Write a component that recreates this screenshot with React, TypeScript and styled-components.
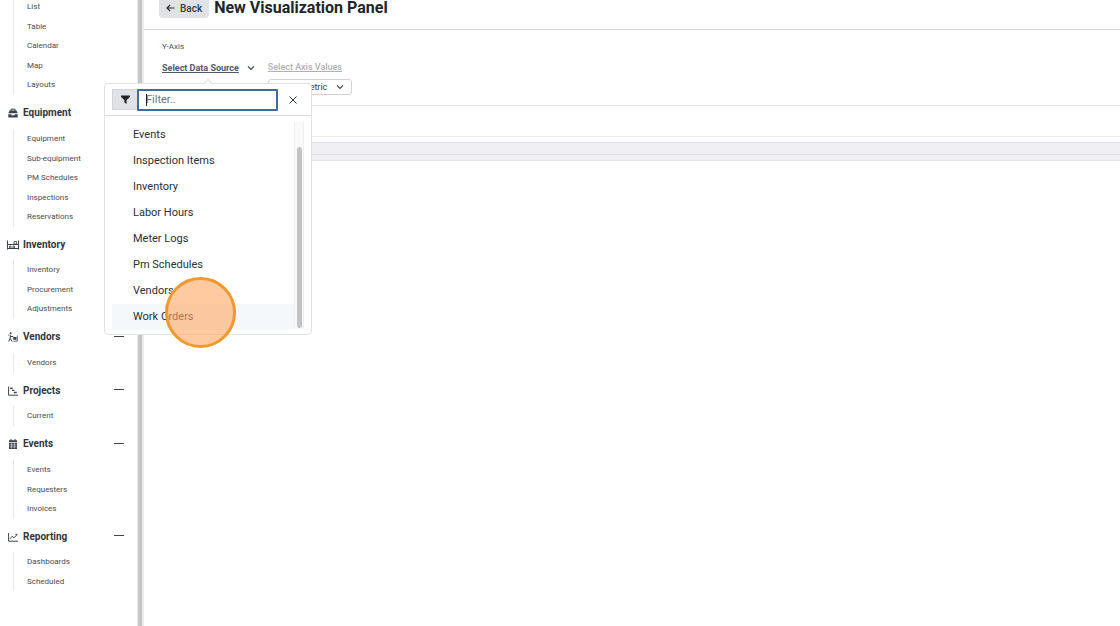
import React from 'react';
import styled, { createGlobalStyle } from 'styled-components';

const GlobalStyle = createGlobalStyle`
  *, *::before, *::after { box-sizing: border-box; }
  html, body, #root { height: 100%; }
  body {
    margin: 0;
    overflow: hidden;
    background: #fff;
    color: #343a40;
    font-family: Roboto, "Liberation Sans", sans-serif;
  }
  ul { list-style: none; margin: 0; padding: 0; }
  button, input, select { font-family: inherit; color: inherit; margin: 0; }
`;

const Shell = styled.div`
  display: flex;
  height: 100%;
  overflow: hidden;
`;

const Sidebar = styled.nav`
  flex: 0 0 137px;
  padding: 0 13px 0 8px;
`;

const Splitter = styled.div`
  flex: 0 0 7px;
  background: #c6c6c6;
  border: solid #ebebeb;
  border-width: 0 2px 0 1px;
`;

const Section = styled.section`
  &:first-child { margin-top: -3px; }
`;

const SectionHeader = styled.h2`
  display: flex;
  align-items: center;
  gap: 5px;
  height: 34px;
  margin: 0;
  padding-top: 2px;
  font-size: 10px;
  font-weight: 700;
  line-height: 14px;
  color: #30363d;
  ${Section}:nth-child(odd) & { height: 33px; }
`;

const SectionIcon = styled.svg`
  flex: none;
  width: 10px;
  height: 10px;
  overflow: visible;
  fill: none;
  stroke: #3c434b;
`;

const Collapse = styled.button`
  display: flex;
  margin-left: auto;
  padding: 4px 0 6px;
  border: 0;
  background: none;
  &::before {
    content: "";
    width: 10px;
    height: 1px;
    background: #3c434b;
  }
`;

const LinkList = styled.ul`
  margin-left: 5px;
  padding-left: 13px;
  border-left: 1px solid #e6e7e9;
`;

const LinkItem = styled.li`
  display: flex;
  align-items: center;
  height: 20px;
  &:nth-child(even) { height: 19px; }
`;

const NavLink = styled.a`
  font-size: 8px;
  line-height: 12px;
  color: #474d54;
  text-decoration: none;
`;

const Main = styled.main`
  flex: 1;
  min-width: 0;
`;

const TopBar = styled.header`
  display: flex;
  align-items: flex-end;
  gap: 5px;
  height: 30px;
  padding: 0 15px 11px;
  border-bottom: 1px solid #d3d6d9;
`;

const BackButton = styled.button`
  display: flex;
  flex: none;
  align-items: center;
  gap: 5px;
  height: 22px;
  padding: 2px 7px 0;
  border: 0;
  border-radius: 4px;
  background: #e1e2e6;
  font-size: 10px;
  font-weight: 500;
`;

const Title = styled.h1`
  margin: 0;
  font-size: 16px;
  font-weight: 700;
  line-height: 20px;
  color: #212529;
`;

const AxisPanel = styled.section`
  height: 76px;
  padding: 11px 18px 0;
  border-bottom: 1px solid #e6e7ea;
`;

const AxisLabel = styled.p`
  margin: 0;
  font-size: 8px;
  line-height: 12px;
  color: #474d54;
`;

const AxisRow = styled.div`
  display: flex;
  align-items: flex-start;
  gap: 13px;
  padding-top: 7px;
`;

const AxisColumn = styled.div`
  position: relative;
  display: flex;
  flex-direction: column;
  align-items: flex-start;
  gap: 5px;
`;

const LinkButton = styled.button<{ $muted?: boolean }>`
  display: flex;
  align-items: center;
  gap: 8px;
  margin-top: ${(p) => (p.$muted ? '0' : '1px')};
  padding: 0;
  border: 0;
  background: none;
  font-size: 9px;
  font-weight: ${(p) => (p.$muted ? 500 : 700)};
  line-height: 14px;
  color: ${(p) => (p.$muted ? '#b0b0b0' : '#4a5a6b')};
  span { text-decoration: underline; }
`;

const MetricBox = styled.span`
  display: flex;
  align-items: center;
  height: 16px;
  padding-right: 7px;
  border: 1px solid #d0d4d8;
  border-radius: 3px;
`;

const MetricSelect = styled.select`
  appearance: none;
  width: 67px;
  padding: 0 0 0 6px;
  border: 0;
  background: none;
  font-size: 9px;
  line-height: 14px;
  outline: 0;
`;

const Popup = styled.div`
  position: absolute;
  z-index: 2;
  top: 23px;
  left: -58px;
  width: 208px;
  height: 252px;
  border: 1px solid #e0e2e5;
  border-radius: 4px;
  background: #fff;
  &::before {
    content: "";
    position: absolute;
    top: -4px;
    left: 100px;
    width: 6px;
    height: 6px;
    border: solid #dfe1e4;
    border-width: 1px 0 0 1px;
    background: #fff;
    transform: rotate(45deg);
  }
`;

const FilterBar = styled.div`
  display: flex;
  align-items: center;
  height: 32px;
  padding: 0 3px 0 7px;
  border-bottom: 1px solid #dadde0;
`;

const FilterIcon = styled.label`
  display: flex;
  align-items: center;
  justify-content: center;
  width: 25px;
  height: 21px;
  border: 1px solid #d3d5da;
  border-right: 0;
  background: #e1e2e7;
`;

const FilterField = styled.span`
  position: relative;
  flex: 1;
  display: flex;
`;

const FilterInput = styled.input`
  width: 100%;
  height: 22px;
  padding: 0 7px;
  border: 2px solid #3f6d99;
  border-radius: 1px;
  background: #fff;
  font-size: 11px;
  outline: 0;
  &::placeholder { color: #6c757d; opacity: 1; }
`;

const Caret = styled.i`
  position: absolute;
  top: 5px;
  left: 9px;
  width: 1px;
  height: 12px;
  background: #222;
`;

const CloseButton = styled.button`
  display: flex;
  align-items: center;
  justify-content: center;
  width: 30px;
  height: 21px;
  padding: 0;
  border: 0;
  background: none;
`;

const OptionArea = styled.div`
  display: flex;
  height: 213px;
  padding: 6px 7px 0;
`;

const OptionList = styled.ul`
  flex: 1;
`;

const Option = styled.li<{ $active?: boolean }>`
  height: 26px;
  background: ${(p) => (p.$active ? '#f5f8fb' : 'transparent')};
`;

const OptionButton = styled.button`
  display: block;
  width: 100%;
  height: 26px;
  padding: 0 21px;
  border: 0;
  background: none;
  font-size: 11px;
  line-height: 26px;
  text-align: left;
  color: #2b3036;
`;

const Track = styled.div`
  width: 10px;
  padding: 25px 2px 0;
  background: #f9f9fa;
  border: solid #f0f0f1;
  border-width: 0 1px;
`;

const Thumb = styled.div`
  width: 5px;
  height: 181px;
  border-radius: 3px;
  background: #c3c3c3;
`;

const Ring = styled.div`
  position: absolute;
  top: 193px;
  left: 60px;
  width: 71px;
  height: 71px;
  border: 3px solid #ef982f;
  border-radius: 50%;
  background: rgba(255, 166, 96, 0.6);
`;

const Spacer = styled.div`
  height: 31px;
  border-bottom: 1px solid #ececef;
`;

const Band = styled.div`
  height: 19px;
  margin-top: 5px;
  border: solid #e2e2e8;
  border-width: 1px 0;
  background: #efeff4;
  &::before {
    content: "";
    display: block;
    height: 12px;
    border-bottom: 1px solid #dfdfe6;
  }
`;

const Chevron = () => (
  <svg width="8" height="8" viewBox="0 0 8 8" fill="none" stroke="#3c434b" strokeWidth="1.2">
    <path d="M1 2.3 4 5.4 7 2.3" />
  </svg>
);

const icons: Record<string, React.ReactNode> = {
  Equipment: (
    <>
      <path d="M3 3V1.2h4V3" />
      <path d="M.3 5.2 1.6 2.6h6.8l1.3 2.6zM.3 6.2h3v1h3.4v-1h3V9.4H.3z" fill="#3c434b" stroke="none" />
    </>
  ),
  Inventory: (
    <>
      <path d="M-.5 .5v9M10.500 .5v9M-.5 4.500h11M-.5 8.500h11" />
      <path d="M6 1.500h2.500v2.500H6zM1.500 6h1.500v2H1.500zM5 6h1.500v2H5z" strokeWidth=".8" />
    </>
  ),
  Vendors: (
    <>
      <circle cx="2.6" cy="1.300" r="1" fill="#3c434b" stroke="none" />
      <path d="M.3 3h1M2.300 3v3.500L4 9.500M2.300 4.500h3M1.800 6.500.8 9.600" />
      <path d="M5.200 5h3.300v2.800H5.200z" fill="#3c434b" stroke="none" />
      <path d="M9.300 3.500v5.700H5.500" strokeWidth=".8" />
    </>
  ),
  Projects: (
    <>
      <path d="M.6.500v8.700H10" />
      <path d="M2.200 2.300h2.500M3.900 4.400h2.500M5.800 6.500h3" strokeWidth="1.400" />
    </>
  ),
  Events: (
    <>
      <path d="M3 0v2M7 0v2" />
      <path d="M1 1.200h8v2H1zM1 3.900h8V10H1z" fill="#3c434b" stroke="none" />
      <path d="M1.500 5.900h7M1.500 7.900h7M3.600 4v5.500M6.400 4v5.500" stroke="#fff" strokeWidth=".5" />
    </>
  ),
  Reporting: <path d="M.6 1v8.200H10M2 6.800l2.200-2.600 1.800 1.600L9.200 2.500M7.400 2.400h2" />,
};

const sections: { title?: string; links: string[] }[] = [
  { links: ['List', 'Table', 'Calendar', 'Map', 'Layouts'] },
  { title: 'Equipment', links: ['Equipment', 'Sub-equipment', 'PM Schedules', 'Inspections', 'Reservations'] },
  { title: 'Inventory', links: ['Inventory', 'Procurement', 'Adjustments'] },
  { title: 'Vendors', links: ['Vendors'] },
  { title: 'Projects', links: ['Current'] },
  { title: 'Events', links: ['Events', 'Requesters', 'Invoices'] },
  { title: 'Reporting', links: ['Dashboards', 'Scheduled'] },
];

const sources = ['Events', 'Inspection Items', 'Inventory', 'Labor Hours', 'Meter Logs', 'Pm Schedules', 'Vendors', 'Work Orders'];

export default function App() {
  return (
    <>
      <GlobalStyle />
      <Shell>
        <Sidebar>
          {sections.map((s, i) => (
            <Section key={i}>
              {s.title && (
                <SectionHeader>
                  <SectionIcon viewBox="0 0 10 10">{icons[s.title]}</SectionIcon>
                  {s.title}
                  <Collapse aria-label={`Collapse ${s.title}`} />
                </SectionHeader>
              )}
              <LinkList>
                {s.links.map((l) => (
                  <LinkItem key={l}><NavLink href="#">{l}</NavLink></LinkItem>
                ))}
              </LinkList>
            </Section>
          ))}
        </Sidebar>
        <Splitter />
        <Main>
          <TopBar>
            <BackButton>
              <svg width="9" height="8" viewBox="0 0 9 8" fill="none" stroke="#2b3036" strokeWidth="1.2">
                <path d="M8.500 4H1M4 1 1 4l3 3" />
              </svg>
              Back
            </BackButton>
            <Title>New Visualization Panel</Title>
          </TopBar>
          <AxisPanel>
            <AxisLabel>Y-Axis</AxisLabel>
            <AxisRow>
              <AxisColumn>
                <LinkButton aria-haspopup="listbox" aria-expanded="true">
                  <span>Select Data Source</span>
                  <Chevron />
                </LinkButton>
                <Popup>
                  <FilterBar>
                    <FilterIcon htmlFor="filter" aria-label="Filter">
                      <svg width="9" height="9" viewBox="0 0 9 9" fill="#1f2328">
                        <path d="M0 .500h9v1.200L5.600 5.200V9L3.400 7.600V5.200L0 1.700z" />
                      </svg>
                    </FilterIcon>
                    <FilterField>
                      <FilterInput id="filter" placeholder="Filter.." />
                      <Caret />
                    </FilterField>
                    <CloseButton aria-label="Close">
                      <svg width="8" height="8" viewBox="0 0 8 8" stroke="#2b3036">
                        <path d="M.5.500l7 7M7.500.500l-7 7" />
                      </svg>
                    </CloseButton>
                  </FilterBar>
                  <OptionArea>
                    <OptionList>
                      {sources.map((o) => (
                        <Option key={o} $active={o === 'Work Orders'}>
                          <OptionButton>{o}</OptionButton>
                        </Option>
                      ))}
                    </OptionList>
                    <Track><Thumb /></Track>
                  </OptionArea>
                  <Ring />
                </Popup>
              </AxisColumn>
              <AxisColumn>
                <LinkButton $muted><span>Select Axis Values</span></LinkButton>
                <MetricBox>
                  <MetricSelect aria-label="Metric" defaultValue="metric">
                    <option value="metric">Select Metric</option>
                  </MetricSelect>
                  <Chevron />
                </MetricBox>
              </AxisColumn>
            </AxisRow>
          </AxisPanel>
          <Spacer />
          <Band />
        </Main>
      </Shell>
    </>
  );
}
